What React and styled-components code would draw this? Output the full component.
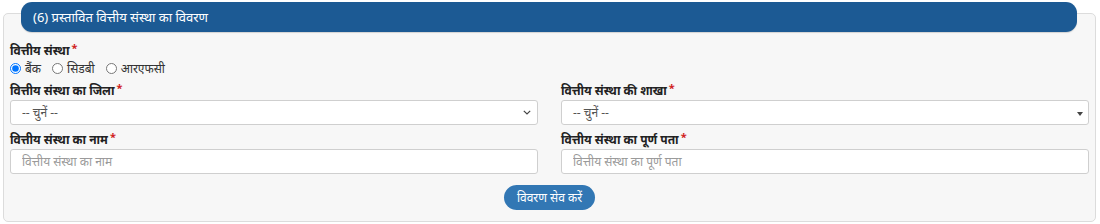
import React from "react";
import styled, { createGlobalStyle } from "styled-components";

const Global = createGlobalStyle`
  html, body { margin: 0; padding: 0; background: #ffffff; }
  body { font-family: "Noto Sans", "Noto Sans Devanagari", "Lato", sans-serif; color: #333; }
  * { box-sizing: border-box; }
`;

const Page = styled.div`
  padding: 13px 4px 3px 3px;
`;

const Panel = styled.section`
  background: #f7f7f7;
  border: 1px solid #dcdcdc;
  border-radius: 5px;
`;

const Header = styled.div`
  position: relative;
  margin: -12px 18px 0 17px;
  height: 30px;
  background: #1c5a94;
  border-radius: 11px;
  color: #ffffff;
  font-size: 13px;
  display: flex;
  align-items: center;
  padding-left: 12px;
  box-shadow: 0 1px 1px rgba(0, 0, 0, 0.15);
`;

const Body = styled.div`
  padding: 10px 6px 11px;
  display: flex;
  flex-direction: column;
`;

const Label = styled.label`
  display: block;
  font-size: 12px;
  font-weight: 700;
  line-height: 17px;
  color: #222;
  margin-bottom: 1px;
`;

const Req = styled.span`
  color: #d0211c;
  font-size: 11px;
  vertical-align: top;
  margin-left: 2px;
  line-height: 12px;
`;

const RadioRow = styled.div`
  display: flex;
  align-items: center;
  gap: 11px;
  height: 17px;
`;

const RadioItem = styled.label`
  display: flex;
  align-items: center;
  gap: 4px;
  font-size: 12px;
  color: #333;
`;

const Radio = styled.input`
  width: 11px;
  height: 11px;
  margin: 0;
`;

const Grid = styled.div`
  display: grid;
  grid-template-columns: 1fr 1fr;
  column-gap: 23px;
  row-gap: 6px;
  margin-top: 5px;
`;

const Field = styled.div`
  display: flex;
  flex-direction: column;
`;

const controlBase = `
  width: 100%;
  height: 25px;
  border: 1px solid #cfcfcf;
  border-radius: 3px;
  background: #ffffff;
  font-family: inherit;
  font-size: 12px;
  color: #555;
  padding: 0 11px;
  outline: none;
`;

const SelectWrap = styled.div`
  position: relative;
`;

const NativeSelect = styled.select`
  ${controlBase}
  appearance: none;
  -webkit-appearance: none;
  display: block;
`;

const Chevron = styled.svg`
  position: absolute;
  right: 7px;
  top: 10px;
  pointer-events: none;
`;

const FakeSelect = styled.div`
  ${controlBase}
  position: relative;
  display: flex;
  align-items: center;
`;

const Caret = styled.span`
  position: absolute;
  right: 5px;
  top: 11px;
  width: 0;
  height: 0;
  border-left: 3px solid transparent;
  border-right: 3px solid transparent;
  border-top: 4px solid #444;
`;

const Input = styled.input`
  ${controlBase}
  &::placeholder { color: #9a9a9a; }
`;

const ButtonRow = styled.div`
  display: flex;
  justify-content: center;
  margin-top: 11px;
`;

const Button = styled.button`
  height: 25px;
  padding: 0 13px;
  border: none;
  border-radius: 13px;
  background: #3277b4;
  color: #ffffff;
  font-family: inherit;
  font-size: 12px;
  cursor: pointer;
`;

export default function App() {
  return (
    <>
      <Global />
      <Page>
        <Panel>
          <Header>(6) प्रस्तावित वित्तीय संस्था का विवरण</Header>
          <Body>
            <Label>
              वित्तीय संस्था<Req>*</Req>
            </Label>
            <RadioRow>
              <RadioItem>
                <Radio type="radio" name="fi" defaultChecked />
                बैंक
              </RadioItem>
              <RadioItem>
                <Radio type="radio" name="fi" />
                सिडबी
              </RadioItem>
              <RadioItem>
                <Radio type="radio" name="fi" />
                आरएफसी
              </RadioItem>
            </RadioRow>
            <Grid>
              <Field>
                <Label>
                  वित्तीय संस्था का जिला<Req>*</Req>
                </Label>
                <SelectWrap>
                  <NativeSelect defaultValue="">
                    <option value="">-- चुनें --</option>
                  </NativeSelect>
                  <Chevron width="8" height="5" viewBox="0 0 8 5">
                    <path d="M0.8 0.8 L4 4 L7.2 0.8" fill="none" stroke="#444" strokeWidth="1.2" />
                  </Chevron>
                </SelectWrap>
              </Field>
              <Field>
                <Label>
                  वित्तीय संस्था की शाखा<Req>*</Req>
                </Label>
                <FakeSelect>
                  -- चुनें --
                  <Caret />
                </FakeSelect>
              </Field>
              <Field>
                <Label>
                  वित्तीय संस्था का नाम<Req>*</Req>
                </Label>
                <Input placeholder="वित्तीय संस्था का नाम" />
              </Field>
              <Field>
                <Label>
                  वित्तीय संस्था का पूर्ण पता<Req>*</Req>
                </Label>
                <Input placeholder="वित्तीय संस्था का पूर्ण पता" />
              </Field>
            </Grid>
            <ButtonRow>
              <Button>विवरण सेव करें</Button>
            </ButtonRow>
          </Body>
        </Panel>
      </Page>
    </>
  );
}
